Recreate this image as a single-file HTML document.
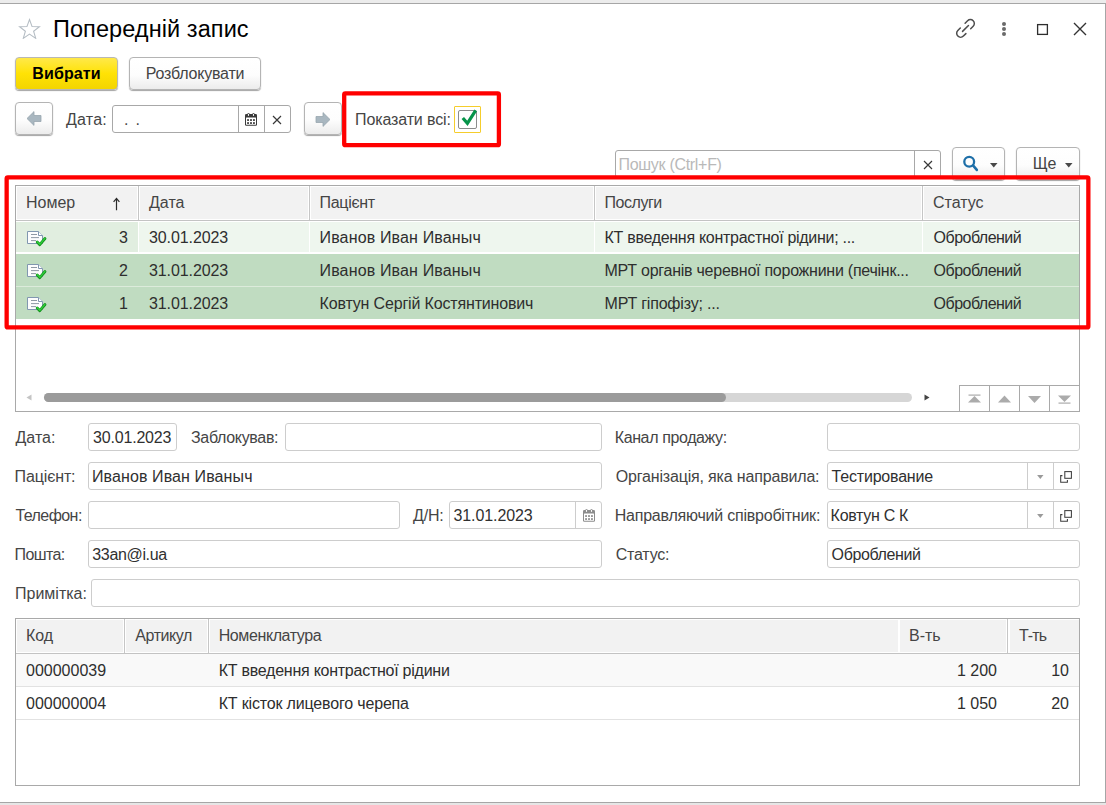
<!DOCTYPE html>
<html lang="uk">
<head>
<meta charset="utf-8">
<title>Попередній запис</title>
<style>
*{box-sizing:border-box;margin:0;padding:0}
html,body{width:1106px;height:805px;overflow:hidden;background:#fff}
body{font-family:"Liberation Sans",sans-serif;font-size:16px;color:#333;position:relative}
.abs{position:absolute}
#frame-top{left:0;top:0;width:1106px;height:3px;background:#ececec}
#frame-topline{left:0;top:3px;width:1106px;height:1px;background:#a6a6a6}
#frame-right{left:1105px;top:3px;width:1px;height:800px;background:#a6a6a6}
#frame-botline{left:0;top:802px;width:1106px;height:1px;background:#a6a6a6}
#frame-bot{left:0;top:803px;width:1106px;height:2px;background:#e6e6e6}
.t{position:absolute;white-space:nowrap;line-height:20px;height:20px}
#title{left:53px;top:15px;font-size:23.5px;line-height:28px;height:28px;color:#000}
.btn{position:absolute;height:33px;border:1px solid #b4b4b4;border-radius:4px;background:linear-gradient(#ffffff 0%,#fdfdfd 55%,#ececec 100%);box-shadow:0 1px 1px rgba(0,0,0,.36);text-align:center;line-height:31px;color:#444;white-space:nowrap}
.btn.yellow{background:linear-gradient(#ffe94a 0%,#ffe205 50%,#f3d500 100%);border-color:#b9b8b4;color:#000;font-weight:bold;letter-spacing:.12px}
.field{position:absolute;height:28px;border:1px solid #a8a8a8;border-radius:3px;background:#fff}
.field.ro{border-color:#cdcdcd}
.field .sep{position:absolute;top:0;bottom:0;width:1px;background:#a8a8a8}
.field.ro .sep{background:#cdcdcd}
.field .v{position:absolute;left:4px;top:4px;line-height:20px;white-space:nowrap;color:#303030}
.lbl{color:#454545}

.grid{position:absolute;border:1px solid #a9a9a9;background:#fff;overflow:hidden}
.hc{position:absolute;top:0;height:34px;background:#f2f2f2;border-right:1px solid #c6c6c6;box-shadow:inset 0 0 0 1px #fff;line-height:34px;padding-left:10px;color:#454545;white-space:nowrap;overflow:hidden}
.hline{position:absolute;left:0;right:0;height:1px;background:#c3c3c3}
.cell{position:absolute;line-height:32px;height:32px;white-space:nowrap;color:#2e2e2e}
</style>
</head>
<body>
<div class="abs" id="frame-top"></div>
<div class="abs" id="frame-topline"></div>
<div class="abs" id="frame-right"></div>
<div class="abs" id="frame-botline"></div>
<div class="abs" id="frame-bot"></div>

<!-- title bar -->
<svg class="abs" style="left:18px;top:18px" width="23" height="21" viewBox="0 0 24 22"><path d="M12 1.6 L14.7 9 L22.4 9.2 L16.3 13.9 L18.5 21.3 L12 16.9 L5.5 21.3 L7.7 13.9 L1.6 9.2 L9.3 9 Z" fill="none" stroke="#b4bcc3" stroke-width="1.1" stroke-linejoin="miter"/></svg>
<div class="t" id="title" style="letter-spacing:0.08px;">Попередній запис</div>

<svg class="abs" style="left:953px;top:16px" width="25" height="25" viewBox="-12.5 -12.5 25 25" fill="none" stroke="#4d4d4d" stroke-width="1.5" stroke-linecap="round"><g transform="translate(0,-.1) rotate(-45)"><path d="M3.4 -3.950 H6.900 A3.950 3.950 0 0 1 6.900 3.950 H3.400"/><path d="M-3.400 3.950 H-6.900 A3.950 3.950 0 0 1 -6.900 -3.950 H-3.400"/><path d="M-4.2 0 H4.2"/></g></svg>
<svg class="abs" style="left:1000px;top:20px" width="8" height="18" viewBox="0 0 8 18"><circle cx="4" cy="4" r="2" fill="#6a6a6a"/><circle cx="4" cy="9" r="2" fill="#6a6a6a"/><circle cx="4" cy="14" r="2" fill="#6a6a6a"/></svg>
<svg class="abs" style="left:1036px;top:22px" width="14" height="14" viewBox="0 0 14 14"><rect x="1.6" y="2.6" width="9.800" height="9.800" fill="none" stroke="#2e2e2e" stroke-width="1.3"/></svg>
<svg class="abs" style="left:1072px;top:21px" width="16" height="16" viewBox="0 0 16 16"><path d="M2 2 L14 14 M14 2 L2 14" stroke="#333" stroke-width="1.4" fill="none"/></svg>

<!-- command bar -->
<div class="btn yellow" style="left:15px;top:57px;width:103px">Вибрати</div>
<div class="btn" style="letter-spacing:-0.2px;left:129px;top:57px;width:132px">Розблокувати</div>

<!-- date nav row -->
<div class="btn" style="left:15px;top:102px;width:38px">
<svg class="abs" style="left:10px;top:8px" width="16" height="15" viewBox="0 0 16 15"><path d="M1 7.5 L8 .6 L8 4.500 L15 4.500 L15 10.500 L8 10.500 L8 14.400 Z" fill="#a9b7c0" stroke="#98a6af" stroke-width=".8"/></svg>
</div>
<div class="t lbl" style="margin-left:1px;letter-spacing:0.2px;left:65px;top:110px">Дата:</div>
<div class="field" style="left:112px;top:105px;width:179px">
  <div class="v" style="left:11px;letter-spacing:-.63px;color:#4a4a4a">.&nbsp;&nbsp;.</div>
  <div class="sep" style="left:125px"></div>
  <div class="sep" style="left:151px"></div>
  <svg class="abs" style="left:132px;top:7px" width="12" height="13" viewBox="0 0 12 13"><rect x="0" y="1" width="12" height="11.700" rx="1.300" fill="#3a3a3a"/><rect x="1" y="4.600" width="10" height="7.100" rx=".3" fill="#fff"/><g fill="#3a3a3a"><rect x="2.100" y="6.200" width="1.900" height="1.700"/><rect x="5.050" y="6.200" width="1.900" height="1.700"/><rect x="8" y="6.200" width="1.900" height="1.700"/><rect x="2.100" y="9.200" width="1.900" height="1.700"/><rect x="5.050" y="9.200" width="1.900" height="1.700"/><rect x="8" y="9.200" width="1.900" height="1.700"/></g><ellipse cx="3.500" cy="1.900" rx="1.350" ry="1.900" fill="#3a3a3a"/><ellipse cx="8.500" cy="1.900" rx="1.350" ry="1.900" fill="#3a3a3a"/><ellipse cx="3.500" cy="1.900" rx=".6" ry="1.100" fill="#fff"/><ellipse cx="8.500" cy="1.900" rx=".6" ry="1.100" fill="#fff"/></svg>
  <svg class="abs" style="left:159px;top:9px" width="10" height="10" viewBox="0 0 10 10"><path d="M1 1 L9 9 M9 1 L1 9" stroke="#383838" stroke-width="1.150" fill="none"/></svg>
</div>
<div class="btn" style="left:304px;top:102px;width:38px">
<svg class="abs" style="left:10px;top:8.500px" width="16" height="15" viewBox="0 0 16 15"><path d="M15 7.5 L8 .6 L8 4.500 L1 4.500 L1 10.500 L8 10.500 L8 14.400 Z" fill="#a9b7c0" stroke="#98a6af" stroke-width=".8"/></svg>
</div>
<div class="t lbl" style="letter-spacing:-0.12px;left:355px;top:110px">Показати всі:</div>
<div class="abs" style="left:454px;top:106px;width:27px;height:27px;border:1px solid #f5cd2c;border-radius:1px;background:#fff"></div>
<div class="abs" style="left:458px;top:110px;width:19px;height:19px;border:1px solid #8c8c8c;border-radius:2px;background:#fff"></div>
<svg class="abs" style="left:457px;top:106px" width="24" height="24" viewBox="0 0 24 24"><path d="M5.800 12 L10.400 17.300 L18.700 4.300" fill="none" stroke="#07944a" stroke-width="3.200" stroke-linejoin="miter"/></svg>

<!-- search row -->
<div class="field" style="left:615px;top:150px;width:326px">
  <div class="v" style="margin-left:-1.5px;letter-spacing:-0.3px;color:#b9b9b9">Пошук (Ctrl+F)</div>
  <div class="sep" style="left:298px"></div>
  <svg class="abs" style="left:307px;top:9px" width="10" height="10" viewBox="0 0 10 10"><path d="M1 1 L9 9 M9 1 L1 9" stroke="#383838" stroke-width="1.150" fill="none"/></svg>
</div>
<div class="btn" style="left:952px;top:147px;width:53px">
  <svg class="abs" style="left:8px;top:4px" width="20" height="22" viewBox="0 0 20 22"><circle cx="8.200" cy="9.700" r="4.900" fill="none" stroke="#1e6fa8" stroke-width="2.300"/><path d="M12.200 13.600 L15.800 17.900" stroke="#1e6fa8" stroke-width="2.600" stroke-linecap="round"/></svg>
  <svg class="abs" style="left:37px;top:14.500px" width="8" height="5" viewBox="0 0 8 5"><path d="M0 0 L7.500 0 L3.750 4.600 Z" fill="#484848"/></svg>
</div>
<div class="btn" style="left:1016px;top:147px;width:64px">
  <span class="abs" style="left:15.700px;top:0;letter-spacing:-.3px">Ще</span>
  <svg class="abs" style="left:48px;top:14.500px" width="8" height="5" viewBox="0 0 8 5"><path d="M0 0 L7.500 0 L3.750 4.600 Z" fill="#484848"/></svg>
</div>

<!-- top grid -->
<div class="grid" id="g1" style="left:15px;top:185px;width:1065px;height:227px">
  <div class="hc" style="left:0;width:123px">Номер<svg class="abs" style="left:96px;top:11px" width="9" height="14" viewBox="0 0 9 14"><path d="M4.500 13.300 V1.500 M1.600 4.800 L4.500 1.400 L7.400 4.800" fill="none" stroke="#2a2a2a" stroke-width="1.2"/></svg></div>
  <div class="hc" style="left:123px;width:171px">Дата</div>
  <div class="hc" style="margin-left:-0.5px;letter-spacing:-0.3px;left:294px;width:285px">Пацієнт</div>
  <div class="hc" style="margin-left:-0.5px;letter-spacing:-0.45px;left:579px;width:328px">Послуги</div>
  <div class="hc" style="left:907px;width:157px;border-right:0">Статус</div>
  <div class="hline" style="top:34px"></div>

  <!-- row 1 (current) -->
  <div class="abs" style="left:0;top:36px;width:122px;height:30px;background:#e1eee0"></div>
  <div class="abs" style="left:123px;top:36px;width:170px;height:30px;background:#eef6ee"></div>
  <div class="abs" style="left:294px;top:36px;width:284px;height:30px;background:#eef6ee"></div>
  <div class="abs" style="left:579px;top:36px;width:327px;height:30px;background:#eef6ee"></div>
  <div class="abs" style="left:907px;top:36px;width:156px;height:30px;background:#eef6ee"></div>
  <!-- row 2,3 -->
  <div class="abs" style="left:0;top:68px;width:1063px;height:32px;background:#c0dcc1"></div>
  <div class="abs" style="left:0;top:100px;width:1063px;height:1px;background:#dcebdb"></div>
  <div class="abs" style="left:0;top:101px;width:1063px;height:32px;background:#c0dcc1"></div>
  <svg class="abs" style="left:10px;top:44px" width="22" height="18" viewBox="0 0 22 18"><path d="M1.500 1.500 L12.500 1.500 L16.500 5.500 L16.500 13.500 L1.500 13.500 Z" fill="#fdfdfe" stroke="#8197b0" stroke-width="1"/><path d="M12.500 1.500 L12.500 5.500 L16.500 5.500" fill="#fff" stroke="#8197b0" stroke-width="1"/><path d="M5 4.500 H11 M5 7.600 H13 M5 10.600 H10" stroke="#8f99a5" stroke-width="1"/><path d="M11.200 12 L13.800 14.700 L19 8.500" fill="none" stroke="#14921d" stroke-width="2.800" stroke-linecap="round" stroke-linejoin="round"/><path d="M11.200 11.800 L13.800 14.400 L18.900 8.400" fill="none" stroke="#2fd03c" stroke-width="1.300" stroke-linecap="round" stroke-linejoin="round"/></svg>
  <svg class="abs" style="left:10px;top:77px" width="22" height="18" viewBox="0 0 22 18"><path d="M1.500 1.500 L12.500 1.500 L16.500 5.500 L16.500 13.500 L1.500 13.500 Z" fill="#fdfdfe" stroke="#8197b0" stroke-width="1"/><path d="M12.500 1.500 L12.500 5.500 L16.500 5.500" fill="#fff" stroke="#8197b0" stroke-width="1"/><path d="M5 4.500 H11 M5 7.600 H13 M5 10.600 H10" stroke="#8f99a5" stroke-width="1"/><path d="M11.200 12 L13.800 14.700 L19 8.500" fill="none" stroke="#14921d" stroke-width="2.800" stroke-linecap="round" stroke-linejoin="round"/><path d="M11.200 11.800 L13.800 14.400 L18.900 8.400" fill="none" stroke="#2fd03c" stroke-width="1.300" stroke-linecap="round" stroke-linejoin="round"/></svg>
  <svg class="abs" style="left:10px;top:110px" width="22" height="18" viewBox="0 0 22 18"><path d="M1.500 1.500 L12.500 1.500 L16.500 5.500 L16.500 13.500 L1.500 13.500 Z" fill="#fdfdfe" stroke="#8197b0" stroke-width="1"/><path d="M12.500 1.500 L12.500 5.500 L16.500 5.500" fill="#fff" stroke="#8197b0" stroke-width="1"/><path d="M5 4.500 H11 M5 7.600 H13 M5 10.600 H10" stroke="#8f99a5" stroke-width="1"/><path d="M11.200 12 L13.800 14.700 L19 8.500" fill="none" stroke="#14921d" stroke-width="2.800" stroke-linecap="round" stroke-linejoin="round"/><path d="M11.200 11.800 L13.800 14.400 L18.900 8.400" fill="none" stroke="#2fd03c" stroke-width="1.300" stroke-linecap="round" stroke-linejoin="round"/></svg>
  <div class="cell" style="left:59px;top:36px;width:53px;text-align:right">3</div>
  <div class="cell" style="left:59px;top:69px;width:53px;text-align:right">2</div>
  <div class="cell" style="left:59px;top:102px;width:53px;text-align:right">1</div>
  <div class="cell" style="margin-left:-1px;letter-spacing:-0.1px;left:134px;top:36px">30.01.2023</div>
  <div class="cell" style="margin-left:-1px;letter-spacing:-0.1px;left:134px;top:69px">31.01.2023</div>
  <div class="cell" style="margin-left:-1px;letter-spacing:-0.1px;left:134px;top:102px">31.01.2023</div>
  <div class="cell" style="margin-left:-1.5px;letter-spacing:0.15px;left:305px;top:36px">Иванов Иван Иваныч</div>
  <div class="cell" style="margin-left:-1.5px;letter-spacing:0.15px;left:305px;top:69px">Иванов Иван Иваныч</div>
  <div class="cell" style="margin-left:-1.5px;letter-spacing:-0.16px;left:305px;top:102px">Ковтун Сергій Костянтинович</div>
  <div class="cell" style="margin-left:-1.5px;letter-spacing:-0.29px;left:590px;top:36px">КТ введення контрастної рідини; ...</div>
  <div class="cell" style="margin-left:-1.5px;letter-spacing:-0.25px;left:590px;top:69px">МРТ органів черевної порожнини (печінк...</div>
  <div class="cell" style="margin-left:-1.5px;letter-spacing:-0.2px;left:590px;top:102px">МРТ гіпофізу; ...</div>
  <div class="cell" style="margin-left:-0.4px;letter-spacing:-0.52px;left:918px;top:36px">Оброблений</div>
  <div class="cell" style="margin-left:-0.4px;letter-spacing:-0.52px;left:918px;top:69px">Оброблений</div>
  <div class="cell" style="margin-left:-0.4px;letter-spacing:-0.52px;left:918px;top:102px">Оброблений</div>
  <!-- scrollbar -->
  <svg class="abs" style="left:10px;top:208px" width="6" height="7" viewBox="0 0 6 7"><path d="M5.500 .5 L5.500 6.500 L.5 3.500 Z" fill="#c4c4c4"/></svg>
  <div class="abs" style="left:28px;top:207px;width:868px;height:9px;border-radius:5px;background:#d6d6d6"></div>
  <div class="abs" style="left:28px;top:207px;width:682px;height:9px;border-radius:5px;background:#9b9b9b"></div>
  <svg class="abs" style="left:908px;top:208px" width="6" height="7" viewBox="0 0 6 7"><path d="M.5 .5 L.5 6.500 L5.500 3.500 Z" fill="#444"/></svg>
  <!-- nav buttons -->
  <div class="abs" style="left:943px;top:199px;width:121px;height:27px;border:1px solid #a9a9a9;border-right:0;background:#fff"></div>
  <div class="abs" style="left:973px;top:199px;width:1px;height:27px;background:#a9a9a9"></div>
  <div class="abs" style="left:1003px;top:199px;width:1px;height:27px;background:#a9a9a9"></div>
  <div class="abs" style="left:1033px;top:199px;width:1px;height:27px;background:#a9a9a9"></div>
  <svg class="abs" style="left:951px;top:208px" width="15" height="9" viewBox="0 0 15 9"><path d="M1 8.500 L14 8.500 L7.500 2 Z" fill="#ababab"/><rect x="1.5" y=".5" width="12" height="1.2" fill="#ababab"/></svg>
  <svg class="abs" style="left:981px;top:208px" width="15" height="9" viewBox="0 0 15 9"><path d="M1 8.500 L14 8.500 L7.500 1.500 Z" fill="#ababab"/></svg>
  <svg class="abs" style="left:1011px;top:209px" width="15" height="9" viewBox="0 0 15 9"><path d="M1 1 L14 1 L7.500 8 Z" fill="#ababab"/></svg>
  <svg class="abs" style="left:1041px;top:209px" width="15" height="9" viewBox="0 0 15 9"><path d="M1 .5 L14 .5 L7.500 7 Z" fill="#ababab"/><rect x="1.5" y="7.500" width="12" height="1.2" fill="#ababab"/></svg>
</div>

<!-- form -->
<div class="t lbl" style="margin-left:0.5px;left:15px;top:428px">Дата:</div>
<div class="field ro" style="left:88px;top:423px;width:89px"><div class="v" style="letter-spacing:-0.18px;">30.01.2023</div></div>
<div class="t lbl" style="margin-left:1px;letter-spacing:-0.32px;left:190px;top:428px">Заблокував:</div>
<div class="field ro" style="left:285px;top:423px;width:317px"></div>
<div class="t lbl" style="margin-left:-0.4px;letter-spacing:-0.14px;left:15px;top:467px">Пацієнт:</div>
<div class="field ro" style="left:88px;top:462px;width:514px"><div class="v" style="margin-left:-1px;letter-spacing:0.1px;">Иванов Иван Иваныч</div></div>
<div class="t lbl" style="margin-left:0.5px;letter-spacing:-0.57px;left:15px;top:506px">Телефон:</div>
<div class="field ro" style="left:88px;top:501px;width:312px"></div>
<div class="t lbl" style="margin-left:1px;letter-spacing:-0.2px;left:412px;top:506px">Д/Н:</div>
<div class="field ro" style="left:449px;top:501px;width:153px"><div class="v" style="margin-left:-0.5px;letter-spacing:-0.1px;">31.01.2023</div><div class="sep" style="left:125px"></div>
  <svg class="abs" style="left:132.5px;top:7px" width="12" height="13" viewBox="0 0 12 13"><rect x="0" y="1" width="12" height="11.700" rx="1.300" fill="#8c8c8c"/><rect x="1" y="4.600" width="10" height="7.100" rx=".3" fill="#fff"/><g fill="#8c8c8c"><rect x="2.100" y="6.200" width="1.900" height="1.700"/><rect x="5.050" y="6.200" width="1.900" height="1.700"/><rect x="8" y="6.200" width="1.900" height="1.700"/><rect x="2.100" y="9.200" width="1.900" height="1.700"/><rect x="5.050" y="9.200" width="1.900" height="1.700"/><rect x="8" y="9.200" width="1.900" height="1.700"/></g><ellipse cx="3.500" cy="1.900" rx="1.350" ry="1.900" fill="#8c8c8c"/><ellipse cx="8.500" cy="1.900" rx="1.350" ry="1.900" fill="#8c8c8c"/><ellipse cx="3.500" cy="1.900" rx=".6" ry="1.100" fill="#fff"/><ellipse cx="8.500" cy="1.900" rx=".6" ry="1.100" fill="#fff"/></svg>
</div>
<div class="t lbl" style="margin-left:-0.4px;letter-spacing:-0.64px;left:15px;top:545px">Пошта:</div>
<div class="field ro" style="left:88px;top:540px;width:514px"><div class="v" style="margin-left:-0.7px;letter-spacing:-0.35px;">33an@i.ua</div></div>
<div class="t lbl" style="left:15px;top:584px">Примітка:</div>
<div class="field ro" style="left:91px;top:579px;width:989px"></div>

<div class="t lbl" style="margin-left:-0.3px;letter-spacing:-0.38px;left:615px;top:428px">Канал продажу:</div>
<div class="field ro" style="left:827px;top:423px;width:253px"></div>
<div class="t lbl" style="margin-left:0.7px;letter-spacing:-0.17px;left:615px;top:467px">Організація, яка направила:</div>
<div class="field ro" style="left:827px;top:462px;width:253px"><div class="v" style="margin-left:-0.4px;letter-spacing:-0.2px;">Тестирование</div><div class="sep" style="left:199px"></div><div class="sep" style="left:225px"></div>
  <svg class="abs" style="left:209px;top:12px" width="7" height="4" viewBox="0 0 7 4"><path d="M.1 0 L6.500 0 L3.300 3.900 Z" fill="#9a9a9a"/></svg>
  <svg class="abs" style="left:232px;top:8px" width="13" height="12" viewBox="0 0 13 12" fill="none" stroke="#3e3e3e" stroke-width="1.050"><rect x="4.800" y=".6" width="6.600" height="6.700"/><path d="M2.400 4.600 H.7 V11.300 H7.400 V9.100"/></svg>
</div>
<div class="t lbl" style="margin-left:-0.3px;letter-spacing:-0.22px;left:615px;top:506px">Направляючий співробітник:</div>
<div class="field ro" style="left:827px;top:501px;width:253px"><div class="v" style="margin-left:-1.4px;letter-spacing:-0.3px;">Ковтун С К</div><div class="sep" style="left:199px"></div><div class="sep" style="left:225px"></div>
  <svg class="abs" style="left:209px;top:12px" width="7" height="4" viewBox="0 0 7 4"><path d="M.1 0 L6.500 0 L3.300 3.900 Z" fill="#9a9a9a"/></svg>
  <svg class="abs" style="left:232px;top:8px" width="13" height="12" viewBox="0 0 13 12" fill="none" stroke="#3e3e3e" stroke-width="1.050"><rect x="4.800" y=".6" width="6.600" height="6.700"/><path d="M2.400 4.600 H.7 V11.300 H7.400 V9.100"/></svg>
</div>
<div class="t lbl" style="margin-left:0.7px;letter-spacing:-0.2px;left:615px;top:545px">Статус:</div>
<div class="field ro" style="left:827px;top:540px;width:253px"><div class="v" style="margin-left:-0.4px;letter-spacing:-0.38px;">Оброблений</div></div>

<!-- bottom grid -->
<div class="grid" id="g2" style="left:15px;top:618px;width:1065px;height:168px">
  <div class="hc" style="left:0;width:109px">Код</div>
  <div class="hc" style="margin-left:0.3px;letter-spacing:-0.43px;left:109px;width:84px">Артикул</div>
  <div class="hc" style="margin-left:-0.3px;letter-spacing:-0.4px;left:193px;width:691px">Номенклатура</div>
  <div class="hc" style="margin-left:-1px;left:884px;width:109px">В-ть</div>
  <div class="hc" style="letter-spacing:-0.9px;left:993px;width:71px;border-right:0">Т-ть</div>
  <div class="hline" style="top:34px"></div>
  <div class="abs" style="left:0;top:35px;width:1063px;height:32px;background:#f9f9f9"></div>
  <div class="hline" style="top:67px;background:#e2e2e2"></div>
  <div class="hline" style="top:100px;background:#e2e2e2"></div>
  <div class="cell" style="left:10px;top:36px">000000039</div>
  <div class="cell" style="left:10px;top:69px">000000004</div>
  <div class="cell" style="margin-left:-0.3px;letter-spacing:-0.25px;left:203px;top:36px">КТ введення контрастної рідини</div>
  <div class="cell" style="margin-left:-0.3px;letter-spacing:-0.17px;left:203px;top:69px">КТ кісток лицевого черепа</div>
  <div class="cell" style="left:884px;top:36px;width:97px;text-align:right">1 200</div>
  <div class="cell" style="left:884px;top:69px;width:97px;text-align:right">1 050</div>
  <div class="cell" style="left:993px;top:36px;width:60px;text-align:right">10</div>
  <div class="cell" style="left:993px;top:69px;width:60px;text-align:right">20</div>
</div>

<!-- red annotation boxes -->
<svg class="abs" style="left:0;top:0;pointer-events:none" width="1106" height="805" viewBox="0 0 1106 805" fill="none" stroke="#ff0000" stroke-width="4.300"><rect x="344.200" y="93.300" width="154.700" height="51.800" rx="1.200"/><rect x="6.650" y="177.350" width="1081.700" height="150.100" rx="1.200"/></svg>
</body>
</html>
